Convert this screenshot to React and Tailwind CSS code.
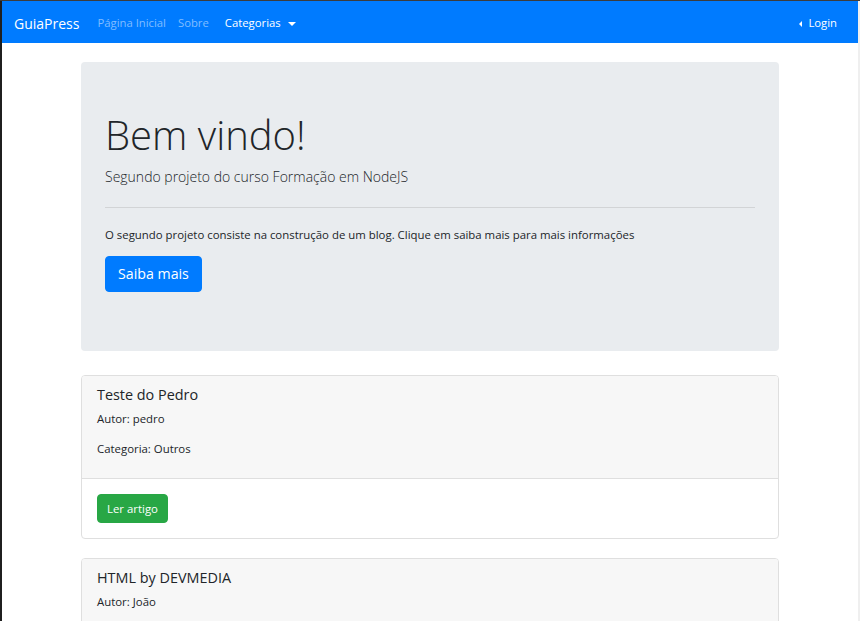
const posts = [
  { title: 'Teste do Pedro', author: 'pedro', category: 'Outros' },
  { title: 'HTML by DEVMEDIA', author: 'João', category: 'Front-end' },
]

const Navbar = () => (
  <nav className="h-[42px] bg-[#007bff] flex items-center px-3 pt-[3px] text-[11.3px]">
    <a href="#" className="text-white text-[14px] mr-3 leading-none">GuiaPress</a>
    <div className="flex items-center">
      <a href="#" className="px-[6px] text-[#80bdff]">Página Inicial</a>
      <a href="#" className="px-[6px] text-[#80bdff]">Sobre</a>
      <a href="#" className="px-[6px] ml-[4px] text-white flex items-center">
        Categorias
        <span className="ml-[7px] inline-block w-0 h-0 border-l-[4px] border-r-[4px] border-t-[4px] border-l-transparent border-r-transparent border-t-white" />
      </a>
    </div>
    <a href="#" className="ml-auto mr-[9px] text-white flex items-center">
      <span className="mr-[6px] inline-block w-0 h-0 border-t-[3.5px] border-b-[3.5px] border-r-[3px] border-t-transparent border-b-transparent border-r-white" />
      Login
    </a>
  </nav>
)

const Jumbotron = () => (
  <div className="bg-[#e9ecef] rounded-[4px] px-6 pt-12 pb-12 mb-6">
    <h1 className="text-[40px] font-light leading-[50px] mb-[6px]">Bem vindo!</h1>
    <p className="text-[14px] font-light leading-[22.5px]">Segundo projeto do curso Formação em NodeJS</p>
    <hr className="my-[18px] border-0 border-t border-[#d2d4d6]" />
    <p className="text-[11.4px] leading-[18px] mb-3">
      O segundo projeto consiste na construção de um blog. Clique em saiba mais para mais informações
    </p>
    <div className="mb-[11px]">
      <a href="#" className="inline-block bg-[#007bff] text-white text-[14.2px] leading-[22.5px] px-3 py-[6px] rounded-[4px] border border-[#007bff]">
        Saiba mais
      </a>
    </div>
  </div>
)

const PostCard = ({ post }) => (
  <div className="border border-[#dfdfdf] rounded-[4px] mb-[19px] bg-white overflow-hidden">
    <div className="bg-[#f7f7f7] border-b border-[#dfdfdf] px-[15px] pt-[10px] pb-[8px]">
      <h5 className="text-[14.4px] font-medium leading-[18px] mb-[6px]">{post.title}</h5>
      <p className="text-[11.4px] leading-[18px] mb-3">Autor: {post.author}</p>
      <p className="text-[11.4px] leading-[18px] mb-3">Categoria: {post.category}</p>
    </div>
    <div className="p-[15px]">
      <a href="#" className="inline-block bg-[#28a745] text-white text-[11.4px] leading-[18px] px-[9px] py-[4.5px] rounded-[4px] border border-[#28a745]">
        Ler artigo
      </a>
    </div>
  </div>
)

export default function App() {
  return (
    <div className="min-h-screen flex flex-col bg-white text-[#212529] font-['Open_Sans','Noto_Sans',sans-serif]">
      <div className="h-px bg-[#3c3c3c]" />
      <div className="flex flex-1">
        <div className="w-[2px] bg-[#1f1f1f]" />
        <div className="flex-1 min-w-0">
          <Navbar />
          <main className="w-[698px] mx-auto pt-[19px]">
            <Jumbotron />
            {posts.map((p) => (
              <PostCard key={p.title} post={p} />
            ))}
          </main>
        </div>
        <div className="w-[2px] bg-[#efefef]" />
      </div>
    </div>
  )
}
